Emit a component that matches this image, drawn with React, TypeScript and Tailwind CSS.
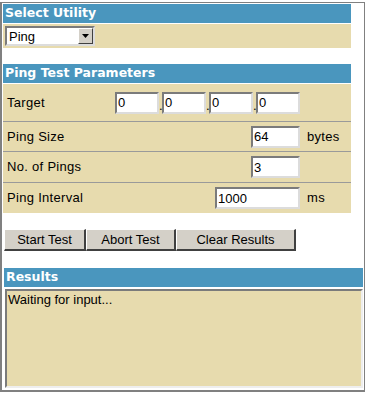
import React from "react";

const BLUE = "bg-[#4a96be]";
const BEIGE = "bg-[#e7dbae]";

function Field({ value, w }: { value: string; w: string }) {
  return (
    <div
      className={`${w} h-[22px] bg-white border-2 border-t-[#7b7b7b] border-l-[#7b7b7b] border-b-[#dcdcdc] border-r-[#dcdcdc] flex items-center pl-[1px] text-[13px] leading-none text-black`}
    >
      {value}
    </div>
  );
}

function Header({ title, w = "w-[348px]" }: { title: string; w?: string }) {
  return (
    <div
      className={`${w} h-[19px] ${BLUE} flex items-center pl-[2px] text-white font-bold text-[12.5px] leading-none`}
      style={{ fontFamily: '"DejaVu Sans", Verdana, sans-serif' }}
    >
      {title}
    </div>
  );
}

function Btn({ label, w }: { label: string; w: string }) {
  return (
    <div
      className={`${w} h-[22px] bg-[#d4d0c8] border-t border-l border-t-white border-l-white border-r-2 border-b-2 border-r-[#404040] border-b-[#404040] flex items-center justify-center text-[13px] text-black`}
    >
      {label}
    </div>
  );
}

const LABEL = "pl-[4px] text-[13px] tracking-[0.3px]";

export default function App() {
  return (
    <div
      className="w-[367px] h-[393px] bg-white pt-[2px]"
      style={{ fontFamily: '"Liberation Sans", Arial, sans-serif' }}
    >
      <div className="w-[365px] h-[390px] border-t border-l-2 border-r border-b-2 border-[#808080] pl-px pt-px overflow-hidden">
        <Header title="Select Utility" />
        <div className={`w-[348px] h-[24px] mt-px ${BEIGE} flex items-center pl-[2px]`}>
          <div className="w-[90px] h-[20px] bg-white border-2 border-t-[#7b7b7b] border-l-[#7b7b7b] border-b-[#dcdcdc] border-r-[#dcdcdc] flex items-center">
            <span className="flex-1 pl-[2px] text-[13px] leading-none">Ping</span>
            <div className="w-[15px] h-[16px] bg-[#d4d0c8] border border-t-white border-l-white border-r-[#404040] border-b-[#404040] flex items-center justify-center">
              <svg width="7" height="4" viewBox="0 0 7 4">
                <path d="M0 0h7L3.5 4z" fill="#000" />
              </svg>
            </div>
          </div>
        </div>

        <div className="h-[16px]" />
        <Header title="Ping Test Parameters" />
        <div className="w-[348px] mt-px">
          <div className={`h-[37px] ${BEIGE} flex items-center`}>
            <div className={`w-[112px] ${LABEL}`}>Target</div>
            <div className="flex items-end">
              <Field value="0" w="w-[44px]" />
              <span className="w-[3px] text-[13px] leading-none mb-[2px]">.</span>
              <Field value="0" w="w-[44px]" />
              <span className="w-[3px] text-[13px] leading-none mb-[2px]">.</span>
              <Field value="0" w="w-[44px]" />
              <span className="w-[3px] text-[13px] leading-none mb-[2px]">.</span>
              <Field value="0" w="w-[44px]" />
            </div>
          </div>
          <div className="h-px bg-[#9a9a9a]" />
          <div className={`h-[29px] ${BEIGE} flex items-center`}>
            <div className={`w-[248px] ${LABEL}`}>Ping Size</div>
            <Field value="64" w="w-[49px]" />
            <div className="pl-[7px] text-[13px] tracking-[0.3px]">bytes</div>
          </div>
          <div className="h-px bg-[#9a9a9a]" />
          <div className={`h-[30px] ${BEIGE} flex items-center`}>
            <div className={`w-[248px] ${LABEL}`}>No. of Pings</div>
            <Field value="3" w="w-[49px]" />
          </div>
          <div className="h-px bg-[#9a9a9a]" />
          <div className={`h-[30px] ${BEIGE} flex items-center`}>
            <div className={`w-[212px] ${LABEL}`}>Ping Interval</div>
            <Field value="1000" w="w-[85px]" />
            <div className="pl-[7px] text-[13px] tracking-[0.3px]">ms</div>
          </div>
        </div>

        <div className="flex mt-[16px] ml-px">
          <Btn label="Start Test" w="w-[82px]" />
          <Btn label="Abort Test" w="w-[90px]" />
          <Btn label="Clear Results" w="w-[120px]" />
        </div>

        <div className="mt-[17px] ml-px">
          <Header title="Results" w="w-[359px]" />
          <div className="w-[358px] h-[99px] mt-[2px] ml-px border-2 border-t-[#7b7b7b] border-l-[#7b7b7b] border-b-[#eeeeee] border-r-[#eeeeee]">
            <div className={`w-full h-full ${BEIGE} text-[13px] leading-[15px] pl-[1px] pt-px`}>
              Waiting for input...
            </div>
          </div>
        </div>
      </div>
    </div>
  );
}
